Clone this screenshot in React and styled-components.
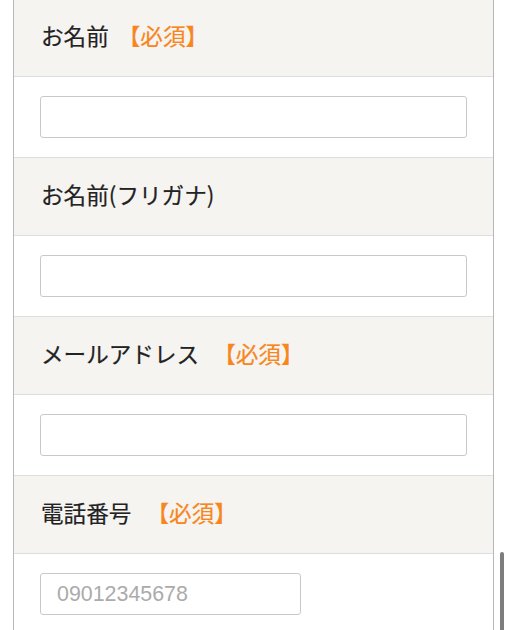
import React from "react";
import styled, { createGlobalStyle } from "styled-components";

const GlobalStyle = createGlobalStyle`
  html, body {
    margin: 0;
    padding: 0;
    background: #ffffff;
    overflow: hidden;
  }
  body {
    font-family: "Noto Sans CJK JP", "Noto Sans", sans-serif;
    color: #333333;
  }
`;

const Page = styled.div`
  position: relative;
  width: 508px;
  height: 630px;
  overflow: hidden;
`;

const Form = styled.form`
  margin: -1px 14px 0 13px;
  border-left: 1px solid #b8b8b8;
  border-right: 1px solid #b8b8b8;
  display: flex;
  flex-direction: column;
`;

const Label = styled.div`
  height: 74px;
  box-sizing: content-box;
  display: flex;
  align-items: center;
  padding: 0 0 3px 27px;
  background: #f5f4f1;
  border-bottom: 1px solid #dedede;
  font-size: 22.6px;
  line-height: 1;
  color: #222222;
  -webkit-text-stroke: 0.2px #222222;
`;

const Required = styled.span`
  color: #f7861e;
  -webkit-text-stroke: 0.2px #f7861e;
  margin-left: ${(p) => p.$gap}px;
`;

const Field = styled.div`
  height: 80px;
  box-sizing: content-box;
  display: flex;
  align-items: center;
  padding: 0 26px;
  border-bottom: 1px solid #dedede;
`;

const Input = styled.input`
  box-sizing: border-box;
  width: ${(p) => p.$width || "100%"};
  height: 42px;
  border: 1px solid #c9c9c9;
  border-radius: 3px;
  background: #ffffff;
  padding: 0 16px;
  font-family: "Liberation Sans", Arial, sans-serif;
  font-size: 21.4px;
  color: #333;
  outline: none;
  &::placeholder {
    color: #ababab;
  }
`;

const Scrollbar = styled.div`
  position: absolute;
  left: 500px;
  top: 552px;
  width: 4px;
  height: 100px;
  border-radius: 2px;
  background: #7d7d7d;
`;

const fields = [
  { label: "お名前", required: true, gap: 9 },
  { label: "お名前(フリガナ)", required: false },
  { label: "メールアドレス", required: true, gap: 14 },
  { label: "電話番号", required: true, gap: 15, placeholder: "09012345678", width: "261px" },
];

export default function App() {
  return (
    <Page>
      <GlobalStyle />
      <Form>
        {fields.map((f) => (
          <React.Fragment key={f.label}>
            <Label>
              {f.label}
              {f.required && <Required $gap={f.gap}>【必須】</Required>}
            </Label>
            <Field>
              <Input type="text" placeholder={f.placeholder} $width={f.width} />
            </Field>
          </React.Fragment>
        ))}
      </Form>
      <Scrollbar />
    </Page>
  );
}
